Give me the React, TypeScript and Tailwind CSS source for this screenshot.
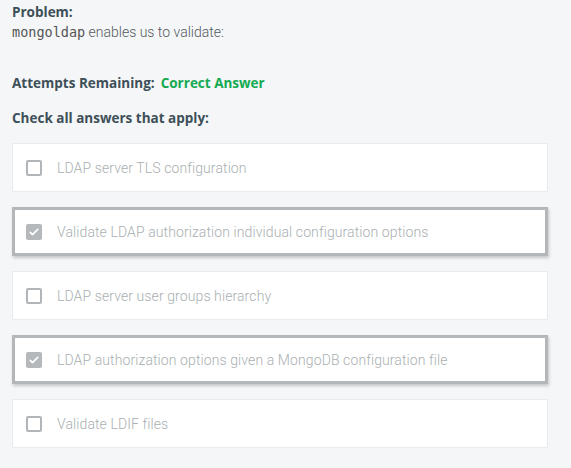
import React from "react";

const options = [
  { label: "LDAP server TLS configuration", checked: false },
  { label: "Validate LDAP authorization individual configuration options", checked: true },
  { label: "LDAP server user groups hierarchy", checked: false },
  { label: "LDAP authorization options given a MongoDB configuration file", checked: true },
  { label: "Validate LDIF files", checked: false },
];

function Checkbox({ checked }: { checked: boolean }) {
  if (checked) {
    return (
      <span className="flex h-4 w-4 shrink-0 items-center justify-center rounded-[2px] bg-[#b5b9bc]">
        <svg viewBox="0 0 16 16" className="h-3 w-3" fill="none">
          <path d="M3 8.5l3 3 7-7" stroke="white" strokeWidth="2.2" strokeLinecap="round" strokeLinejoin="round" />
        </svg>
      </span>
    );
  }
  return <span className="h-4 w-4 shrink-0 rounded-[2px] border-2 border-[#b3b6b8] bg-white" />;
}

export default function App() {
  return (
    <div
      className="min-h-[468px] w-[571px] bg-[#f4f6f7] pl-3 pr-[23px] pt-[2px] text-[13px] leading-5 text-[#3d4f58]"
      style={{ fontFamily: "Roboto, 'Liberation Sans', sans-serif" }}
    >
      <div className="h-5 text-[13.5px] font-bold" style={{ fontFamily: "'Open Sans', sans-serif" }}>Problem:</div>
      <div className="h-5 text-[14px] font-light text-[#555a5e]">
        <span className="text-[13.5px] font-normal text-[#555]" style={{ fontFamily: "'DejaVu Sans Mono', monospace" }}>
          mongoldap
        </span>{" "}
        enables us to validate:
      </div>

      <div className="mt-[31px] flex h-5 gap-[6px] text-[13.5px] font-bold" style={{ fontFamily: "'Open Sans', sans-serif" }}>
        <span>Attempts Remaining:</span>
        <span className="text-[#13aa52]">Correct Answer</span>
      </div>

      <div className="mt-[15px] h-5 text-[13.5px] font-bold" style={{ fontFamily: "'Open Sans', sans-serif" }}>
        Check all answers that apply:
      </div>

      <div className="mt-[15px] flex flex-col gap-[15px]">
        {options.map((o) => (
          <div
            key={o.label}
            className={
              o.checked
                ? "flex h-[49px] items-center gap-[15px] border-[3px] border-[#b4b7ba] bg-white pl-[11px] shadow-[1px_2px_3px_rgba(0,0,0,0.2)]"
                : "flex h-[49px] items-center gap-[15px] border border-[#e7ecee] bg-white pl-[13px]"
            }
          >
            <Checkbox checked={o.checked} />
            <span className="text-[14px] font-light tracking-[0.1px] text-[#a9b0b2]">{o.label}</span>
          </div>
        ))}
      </div>
    </div>
  );
}
